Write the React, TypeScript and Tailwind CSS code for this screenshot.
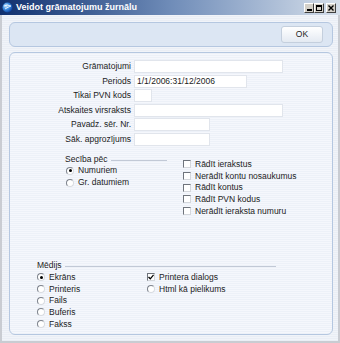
import React from "react";

function Radio({ label, checked }: { label: string; checked?: boolean }) {
  return (
    <div className="flex items-center h-[11.7px]">
      <div className="w-[8px] h-[8px] rounded-full bg-white border border-[#7d828c] border-b-[#d8dbe0] border-r-[#d8dbe0] flex items-center justify-center shrink-0">
        {checked && <div className="w-[3px] h-[3px] rounded-full bg-black" />}
      </div>
      <span className="ml-[4px] whitespace-nowrap">{label}</span>
    </div>
  );
}

function Check({ label, checked }: { label: string; checked?: boolean }) {
  return (
    <div className="flex items-center h-[11.7px]">
      <div className="w-[8px] h-[8px] bg-white border border-[#6f747c] border-b-[#d4d7dc] border-r-[#d4d7dc] flex items-center justify-center shrink-0">
        {checked && (
          <svg width="6" height="6" viewBox="0 0 6 6">
            <path d="M0.5 3 L2.3 4.8 L5.6 0.8" stroke="#000" strokeWidth="1.3" fill="none" />
          </svg>
        )}
      </div>
      <span className="ml-[4px] whitespace-nowrap">{label}</span>
    </div>
  );
}

function Field({ label, width, value }: { label: string; width: string; value?: string }) {
  return (
    <>
      <div className="text-right leading-[13px] h-[13px] whitespace-nowrap">{label}</div>
      <div className={`${width} h-[13px] bg-white border border-[#e1e5ec] leading-[11px] pl-[2px] whitespace-nowrap`}>
        {value}
      </div>
    </>
  );
}

export default function App() {
  return (
    <div className="w-[340px] h-[343px] flex flex-col bg-[#e4e8ef] font-['Liberation_Sans',Arial,sans-serif] text-[8.5px] text-[#1c1c1c] overflow-hidden">
      {/* title bar */}
      <div className="h-[15px] flex items-center bg-gradient-to-r from-[#10306e] via-[#6f8cb8] to-[#d6dfea] pl-[2px] pr-[4px]">
        <svg width="11" height="11" viewBox="0 0 11 11" className="shrink-0">
          <defs>
            <radialGradient id="g" cx="35%" cy="35%" r="70%">
              <stop offset="0" stopColor="#bfe3ff" />
              <stop offset="0.5" stopColor="#3a8be0" />
              <stop offset="1" stopColor="#0b3f9a" />
            </radialGradient>
          </defs>
          <circle cx="5.5" cy="5.5" r="5" fill="url(#g)" />
          <path d="M2 4 Q5 2 9 4 Q6 5 3 7" stroke="#fff" strokeWidth="1" fill="none" opacity="0.8" />
        </svg>
        <span className="ml-[3px] text-white font-bold text-[9px] whitespace-nowrap">Veidot grāmatojumu žurnālu</span>
        <div className="ml-auto flex items-center">
          <div className="w-[10px] h-[10px] bg-[#d4d0c8] border border-white border-b-[#404040] border-r-[#404040] flex items-end justify-center pb-[1px]">
            <div className="w-[5px] h-[2px] bg-black" />
          </div>
          <div className="w-[10px] h-[10px] bg-[#d4d0c8] border border-white border-b-[#404040] border-r-[#404040] flex items-center justify-center">
            <div className="w-[6px] h-[6px] border border-black border-t-2" />
          </div>
          <div className="ml-[2px] w-[10px] h-[10px] bg-[#d4d0c8] border border-white border-b-[#404040] border-r-[#404040] flex items-center justify-center">
            <svg width="6" height="6" viewBox="0 0 6 6">
              <path d="M0.5 0.5 L5.5 5.5 M5.5 0.5 L0.5 5.5" stroke="#000" strokeWidth="1.4" />
            </svg>
          </div>
        </div>
      </div>

      {/* body */}
      <div className="flex-1 flex flex-col pl-[7px] pr-[5px] pt-[7px] pb-[6px] border-l-[2px] border-r-[2px] border-b-[2px] border-[#c9ccd2] bg-[repeating-linear-gradient(0deg,#eaeef5_0px,#eaeef5_1px,#f1f4f9_1px,#f1f4f9_2px)] -ml-0">
        {/* toolbar */}
        <div className="h-[25px] rounded-[6px] border border-[#b5c7e0] bg-[#dce6f3] flex items-center justify-end pr-[9px]">
          <div className="w-[42px] h-[17px] rounded-[3px] border border-[#c4cfdd] bg-gradient-to-b from-[#ffffff] to-[#e4eaf2] flex items-center justify-center text-[8.5px]">
            OK
          </div>
        </div>

        {/* main panel */}
        <div className="mt-[5px] flex-1 rounded-[6px] border border-[#b5c7e0] bg-[repeating-linear-gradient(0deg,#edf1f8_0px,#edf1f8_1px,#f5f7fc_1px,#f5f7fc_2px)] pt-[7px]">
          <div className="grid grid-cols-[121px_1fr] gap-x-[3px] gap-y-[1.6px] items-center">
            <Field label="Grāmatojumi" width="w-[149px]" />
            <Field label="Periods" width="w-[113px]" value="1/1/2006:31/12/2006" />
            <Field label="Tikai PVN kods" width="w-[18px]" />
            <Field label="Atskaites virsraksts" width="w-[149px]" />
            <Field label="Pavadz. sēr. Nr." width="w-[76px]" />
            <Field label="Sāk. apgrozījums" width="w-[76px]" />
          </div>

          <div className="mt-[8px] flex items-start">
            <div className="ml-[55px] w-[102px]">
              <div className="h-[11px] flex items-center">
                <span className="whitespace-nowrap">Secība pēc</span>
                <div className="ml-[3px] flex-1 h-px bg-[#c2c9d6] mt-[3px]" />
              </div>
              <div className="pl-[1px]">
                <Radio label="Numuriem" checked />
                <Radio label="Gr. datumiem" />
              </div>
            </div>
            <div className="ml-[16px] mt-[4.5px]">
              <Check label="Rādīt ierakstus" />
              <Check label="Nerādīt kontu nosaukumus" />
              <Check label="Rādīt kontus" />
              <Check label="Rādīt PVN kodus" />
              <Check label="Nerādīt ieraksta numuru" />
            </div>
          </div>

          <div className="mt-[42px] ml-[27px] w-[239px]">
            <div className="h-[12.5px] flex items-center">
              <span className="whitespace-nowrap">Mēdijs</span>
              <div className="ml-[3px] flex-1 h-px bg-[#c2c9d6] mt-[3px]" />
            </div>
            <div className="flex">
              <div className="w-[110px]">
                <Radio label="Ekrāns" checked />
                <Radio label="Printeris" />
                <Radio label="Fails" />
                <Radio label="Buferis" />
                <Radio label="Fakss" />
              </div>
              <div>
                <Check label="Printera dialogs" checked />
                <Radio label="Html kā pielikums" />
              </div>
            </div>
          </div>
        </div>
      </div>
    </div>
  );
}
